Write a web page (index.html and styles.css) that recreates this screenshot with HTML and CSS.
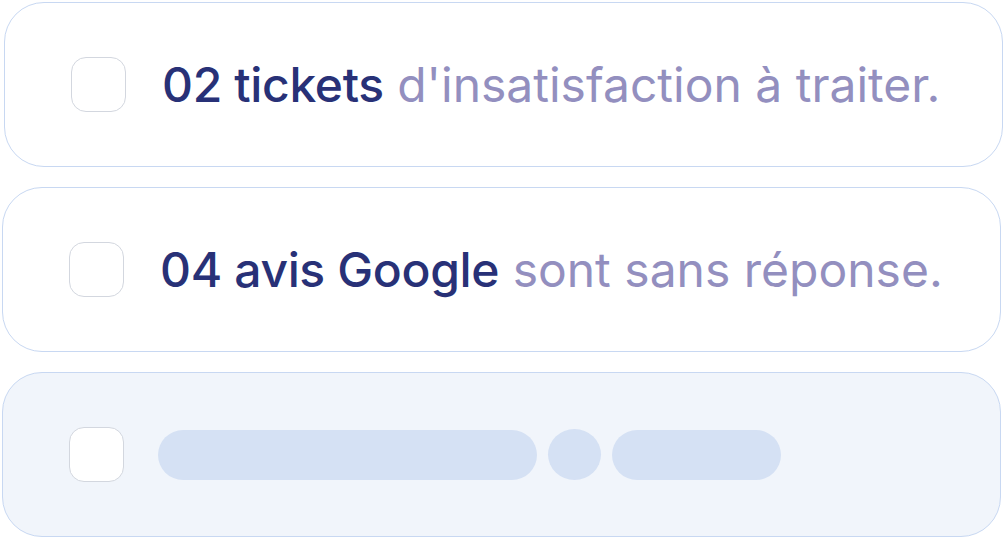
FILE: index.html
```html
<!DOCTYPE html>
<html lang="fr">
<head>
<meta charset="utf-8">
<link rel="stylesheet" href="styles.css">
</head>
<body>
<div class="list">
  <div class="card card--shift">
    <span class="check"></span>
    <p class="line"><strong class="hl">02 tickets</strong> d'insatisfaction à traiter.</p>
  </div>
  <div class="card">
    <span class="check"></span>
    <p class="line"><strong class="hl">04 avis Google</strong> sont sans réponse.</p>
  </div>
  <div class="card card--ghost">
    <span class="check"></span>
    <div class="skeleton">
      <span class="bone bone--long"></span>
      <span class="bone bone--dot"></span>
      <span class="bone bone--mid"></span>
    </div>
  </div>
</div>
</body>
</html>
```

FILE: styles.css
```css
html, body {
  margin: 0;
  padding: 0;
  background: #ffffff;
}

body {
  font-family: Inter, "Noto Sans", sans-serif;
  width: 1006px;
  height: 540px;
  overflow: hidden;
}

.list {
  display: flex;
  flex-direction: column;
  gap: 20px;
  padding: 2px 0 0 2px;
}

.card {
  box-sizing: border-box;
  width: 999px;
  height: 165px;
  border: 1.5px solid #c8d8f2;
  border-radius: 40px;
  background: #ffffff;
  display: flex;
  align-items: center;
  padding-left: 66px;
}

.card--shift {
  margin-left: 2px;
}

.card--ghost {
  background: #f1f5fb;
}

.check {
  flex: none;
  box-sizing: border-box;
  width: 55px;
  height: 55px;
  border: 1.5px solid #d3d7df;
  border-radius: 15px;
  background: #ffffff;
}

.line {
  margin: 0 0 0 36px;
  font-size: 48px;
  font-weight: 400;
  color: #938fbf;
  white-space: nowrap;
}

.hl {
  font-weight: 500;
  color: #283177;
  letter-spacing: -0.35px;
}

.skeleton {
  display: flex;
  align-items: center;
  gap: 11px;
  margin-left: 34px;
}

.bone {
  display: block;
  height: 50px;
  border-radius: 25px;
  background: #d5e1f4;
}

.bone--long {
  width: 379px;
}

.bone--dot {
  width: 53px;
  height: 51px;
  border-radius: 50%;
}

.bone--mid {
  width: 169px;
}
```
